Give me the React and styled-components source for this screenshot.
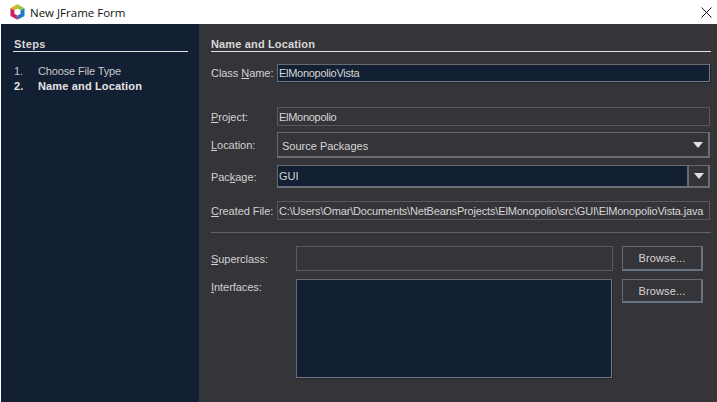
import React from 'react';
import styled, { createGlobalStyle } from 'styled-components';

const GlobalStyle = createGlobalStyle`
  html, body {
    margin: 0;
    padding: 0;
    background: #ffffff;
  }
  body {
    font-family: "Liberation Sans", Arial, sans-serif;
    font-size: 11px;
    color: #d6d6d6;
  }
`;

const Window = styled.div`
  width: 717px;
  height: 402px;
  display: flex;
  flex-direction: column;
  overflow: hidden;
  background: #ffffff;
`;

const TitleBar = styled.div`
  height: 24px;
  flex: none;
  display: flex;
  align-items: center;
  padding: 0 5px 0 10px;
  background: #ffffff;
`;

const TitleText = styled.span`
  margin-left: 5px;
  flex: 1;
  font-family: "Open Sans", "Noto Sans", sans-serif;
  font-size: 11.5px;
  color: #111111;
`;

const Body = styled.div`
  flex: 1;
  display: flex;
  margin-left: 1px;
`;

const Sidebar = styled.aside`
  width: 198px;
  flex: none;
  box-sizing: border-box;
  padding: 14px 11px 0 12px;
  background: #131f33;
`;

const SectionTitle = styled.div`
  height: 13px;
  line-height: 13px;
  padding-left: 1px;
  font-weight: bold;
  letter-spacing: ${(p) => p.$spacing || 0.35}px;
  white-space: nowrap;
  color: #d8d8d8;
  border-bottom: 1px solid #e2e2e2;
`;

const MainTitle = styled(SectionTitle)`
  padding-left: 0;
`;

const StepList = styled.ol`
  list-style: none;
  margin: 12px 0 0;
  padding: 0 0 0 1px;
`;

const Step = styled.li`
  display: flex;
  height: 15px;
  line-height: 15px;
  letter-spacing: ${(p) => (p.$active ? 0.15 : -0.15)}px;
  font-weight: ${(p) => (p.$active ? 'bold' : 'normal')};
  color: ${(p) => (p.$active ? '#e4e4e4' : '#c8c8c8')};
`;

const StepNumber = styled.span`
  width: 24px;
  flex: none;
`;

const Main = styled.main`
  flex: 1;
  box-sizing: border-box;
  padding: 14px 6px 0 12px;
  background: #353439;
`;

const Row = styled.div`
  display: flex;
  align-items: ${(p) => p.$align || 'center'};
  height: ${(p) => p.$height}px;
  margin-top: ${(p) => p.$top || 0}px;
`;

const Label = styled.label`
  width: ${(p) => p.$width || 66}px;
  flex: none;
  white-space: nowrap;
  letter-spacing: -0.05px;
  color: #d2d2d2;
  ${(p) => p.$top && `margin-top: ${p.$top}px;`}
`;

const Field = styled.div`
  width: ${(p) => p.$width || 433}px;
  height: 100%;
  flex: none;
  display: flex;
  align-items: center;
  box-sizing: border-box;
  padding-left: 1px;
  overflow: hidden;
  white-space: nowrap;
  letter-spacing: ${(p) => p.$spacing ?? -0.28}px;
  color: #d6d6d6;
  background: ${(p) => (p.$dark ? '#131f33' : 'transparent')};
  border: 1px solid #5a5a5e;
  ${(p) =>
    p.$dark &&
    `
    border-color: #6a6a6e #727a88 #727a88 #6a6a6e;
    box-shadow: 1px 1px 0 #23252c;
  `}
`;

const Combo = styled.div`
  width: 433px;
  height: 100%;
  flex: none;
  display: flex;
  box-sizing: border-box;
  border-style: solid;
  border-width: 1px 2px 2px 1px;
  border-color: #68686c #6a6e76 #6a6e76 #68686c;
`;

const ComboText = styled.div`
  flex: 1;
  display: flex;
  align-items: center;
  padding: ${(p) => (p.$editable ? '0 0 0 1px' : '2px 0 0 4px')};
  color: #d6d6d6;
  background: ${(p) => (p.$editable ? '#131f33' : 'transparent')};
`;

const ArrowBox = styled.div`
  width: ${(p) => (p.$editable ? 21 : 20)}px;
  flex: none;
  display: flex;
  align-items: center;
  justify-content: center;
  box-sizing: border-box;
  ${(p) => p.$editable && 'border-left: 2px solid #6a6a6e;'}
`;

const Arrow = styled.span`
  width: 0;
  height: 0;
  border-left: 5px solid transparent;
  border-right: 5px solid transparent;
  border-top: 6px solid #e2e2e2;
`;

const Separator = styled.hr`
  margin: 12px 0 0;
  border: 0;
  border-top: 1px solid #5d6470;
`;

const Browse = styled.button`
  width: 81px;
  height: ${(p) => p.$height || 25}px;
  flex: none;
  margin-left: ${(p) => p.$gap || 9}px;
  padding: 0;
  box-sizing: border-box;
  font: inherit;
  letter-spacing: 0.12px;
  color: #d6d6d6;
  background: #353439;
  border-style: solid;
  border-width: 1px 2px 2px 1px;
  border-color: #686a70 #6a7280 #6a7280 #686a70;
`;

function Logo() {
  return (
    <svg width="15" height="16" viewBox="0 0 15 16" aria-hidden="true">
      <path d="M7.5 0.3 14.5 4.2 7.5 8 0.5 4.2Z" fill="#9cc63a" />
      <path d="M7.5 0.3 0.5 4.2 3.5 5.8 7.5 3.5Z" fill="#e3b52f" />
      <path d="M0.5 4.2 7.5 8V15.8L0.5 11.9Z" fill="#d01f63" />
      <path d="M14.5 4.2 7.5 8V15.8L14.5 11.9Z" fill="#2079c7" />
      <path d="M7.5 4.4 10.6 6.2V9.8L7.5 11.6 4.4 9.8V6.2Z" fill="#ffffff" />
    </svg>
  );
}

function CloseIcon() {
  return (
    <svg width="11" height="11" viewBox="0 0 11 11" aria-hidden="true">
      <path d="M0.5 0.5 10.5 10.5M10.5 0.5 0.5 10.5" stroke="#111111" strokeWidth="1" />
    </svg>
  );
}

export default function App() {
  return (
    <>
      <GlobalStyle />
      <Window>
        <TitleBar>
          <Logo />
          <TitleText>New JFrame Form</TitleText>
          <CloseIcon />
        </TitleBar>
        <Body>
          <Sidebar>
            <SectionTitle>Steps</SectionTitle>
            <StepList>
              <Step>
                <StepNumber>1.</StepNumber>
                Choose File Type
              </Step>
              <Step $active>
                <StepNumber>2.</StepNumber>
                Name and Location
              </Step>
            </StepList>
          </Sidebar>
          <Main>
            <MainTitle $spacing={0.15}>Name and Location</MainTitle>
            <Row $height={18} $top={12}>
              <Label>Class <u>N</u>ame:</Label>
              <Field $dark>ElMonopolioVista</Field>
            </Row>
            <Row $height={19} $top={25}>
              <Label><u>P</u>roject:</Label>
              <Field>ElMonopolio</Field>
            </Row>
            <Row $height={26} $top={6}>
              <Label><u>L</u>ocation:</Label>
              <Combo>
                <ComboText>Source Packages</ComboText>
                <ArrowBox><Arrow /></ArrowBox>
              </Combo>
            </Row>
            <Row $height={23} $top={7}>
              <Label>Pac<u>k</u>age:</Label>
              <Combo $editable>
                <ComboText $editable>GUI</ComboText>
                <ArrowBox $editable><Arrow /></ArrowBox>
              </Combo>
            </Row>
            <Row $height={19} $top={13}>
              <Label><u>C</u>reated File:</Label>
              <Field $spacing={-0.17}>C:\Users\Omar\Documents\NetBeansProjects\ElMonopolio\src\GUI\ElMonopolioVista.java</Field>
            </Row>
            <Separator />
            <Row $height={25} $top={13}>
              <Label $width={85}><u>S</u>uperclass:</Label>
              <Field $width={317} />
              <Browse>Browse...</Browse>
            </Row>
            <Row $height={99} $top={8} $align="flex-start">
              <Label $width={85} $top={2}><u>I</u>nterfaces:</Label>
              <Field $width={316} $dark />
              <Browse $height={24} $gap={10}>Browse...</Browse>
            </Row>
          </Main>
        </Body>
      </Window>
    </>
  );
}
